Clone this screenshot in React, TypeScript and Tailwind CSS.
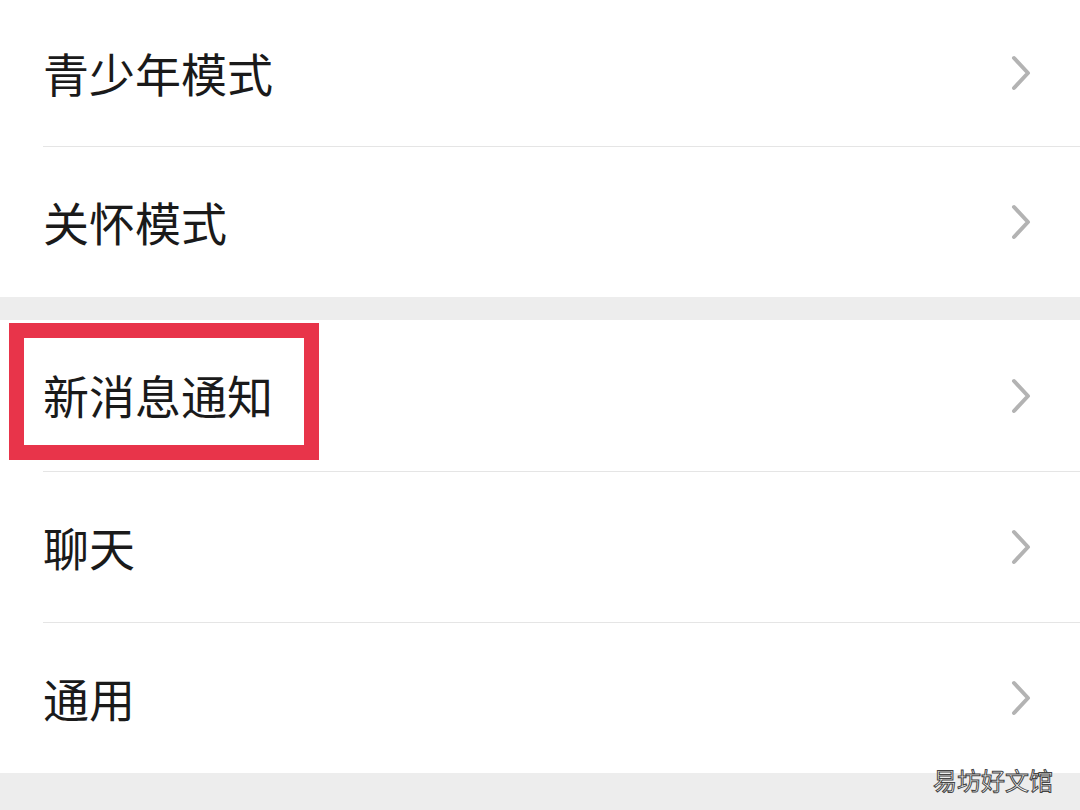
import React from "react";

const groups: string[][] = [
  ["青少年模式", "关怀模式"],
  ["新消息通知", "聊天", "通用"],
];

function Chevron() {
  return (
    <svg width="22" height="36" viewBox="0 0 22 36" className="shrink-0">
      <polyline
        points="4,3 18,18 4,33"
        fill="none"
        stroke="#b3b3b3"
        strokeWidth="4"
        strokeLinecap="round"
        strokeLinejoin="round"
      />
    </svg>
  );
}

function Row({ label, first, height }: { label: string; first: boolean; height: string }) {
  return (
    <div className="pl-[43px]">
      <div
        className={`flex items-center justify-between pr-[48px] ${height} ${
          first ? "" : "border-t border-[#e5e5e5]"
        }`}
      >
        <span className="text-[46px] leading-none text-[#1a1a1a] pb-[3px]">{label}</span>
        <Chevron />
      </div>
    </div>
  );
}

export default function App() {
  return (
    <div
      className="relative w-[1080px] h-[810px] overflow-hidden bg-[#ededed]"
      style={{ fontFamily: '"Noto Sans CJK SC", "Noto Sans", sans-serif' }}
    >
      {/* first group, scrolled so top is cut */}
      <div className="bg-white">
        <Row label={groups[0][0]} first height="h-[146px]" />
        <Row label={groups[0][1]} first={false} height="h-[151px]" />
      </div>

      <div className="h-[23px]" />

      <div className="bg-white">
        <Row label={groups[1][0]} first height="h-[151px]" />
        <Row label={groups[1][1]} first={false} height="h-[151px]" />
        <Row label={groups[1][2]} first={false} height="h-[151px]" />
      </div>

      {/* highlight annotation */}
      <div className="absolute left-[9px] top-[323px] w-[310px] h-[137px] border-[15px] border-[#e8344a]" />

      {/* watermark */}
      <div
        className="absolute right-[27px] bottom-[18px] text-[24px] leading-none text-white"
        style={{ WebkitTextStroke: "1px #444" }}
      >
        易坊好文馆
      </div>
    </div>
  );
}
